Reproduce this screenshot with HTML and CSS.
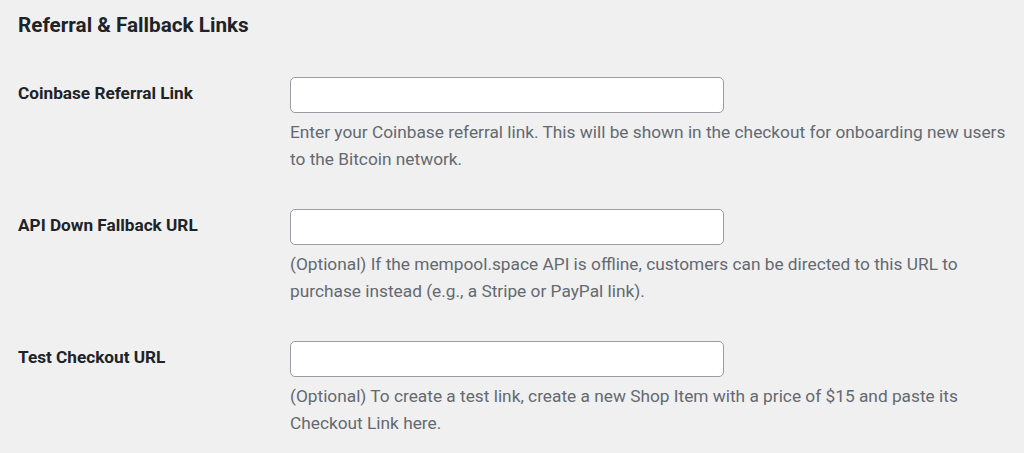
FILE: index.html
```html
<!DOCTYPE html>
<html>
<head>
<meta charset="utf-8">
<link rel="stylesheet" href="styles.css">
</head>
<body>
<div class="page">
  <h2 class="title">Referral &amp; Fallback Links</h2>
  <div class="form">
    <div class="row">
      <label class="label">Coinbase Referral Link</label>
      <div class="field">
        <input class="input" type="text">
        <p class="desc">Enter your Coinbase referral link. This will be shown in the checkout for onboarding new users to the Bitcoin network.</p>
      </div>
    </div>
    <div class="row">
      <label class="label">API Down Fallback URL</label>
      <div class="field">
        <input class="input" type="text">
        <p class="desc">(Optional) If the mempool.space API is offline, customers can be directed to this URL to purchase instead (e.g., a Stripe or PayPal link).</p>
      </div>
    </div>
    <div class="row">
      <label class="label">Test Checkout URL</label>
      <div class="field">
        <input class="input" type="text">
        <p class="desc">(Optional) To create a test link, create a new Shop Item with a price of $15 and paste its Checkout Link here.</p>
      </div>
    </div>
  </div>
</div>
</body>
</html>
```
FILE: styles.css
```css
html, body {
  margin: 0;
  padding: 0;
  background: #f0f0f1;
}
body {
  font-family: Roboto, "Liberation Sans", sans-serif;
  color: #1d2327;
}
.page {
  padding: 13px 0 0 18px;
}
.title {
  margin: 0;
  font-size: 20.7px;
  line-height: 25px;
  font-weight: 700;
  color: #1d2327;
}
.form {
  display: flex;
  flex-direction: column;
  gap: 36px;
  margin-top: 39px;
}
.row {
  display: flex;
}
.label {
  width: 272px;
  flex: none;
  font-size: 17.2px;
  font-weight: 700;
  line-height: 22px;
  padding-top: 5px;
}
.field {
  width: 725px;
}
.input {
  display: block;
  box-sizing: border-box;
  width: 434px;
  height: 36px;
  margin: 0;
  background: #fff;
  border: 1px solid #9a9da1;
  border-radius: 5px;
}
.desc {
  margin: 6px 0 0;
  font-size: 17.3px;
  line-height: 27px;
  color: #646970;
}
```
